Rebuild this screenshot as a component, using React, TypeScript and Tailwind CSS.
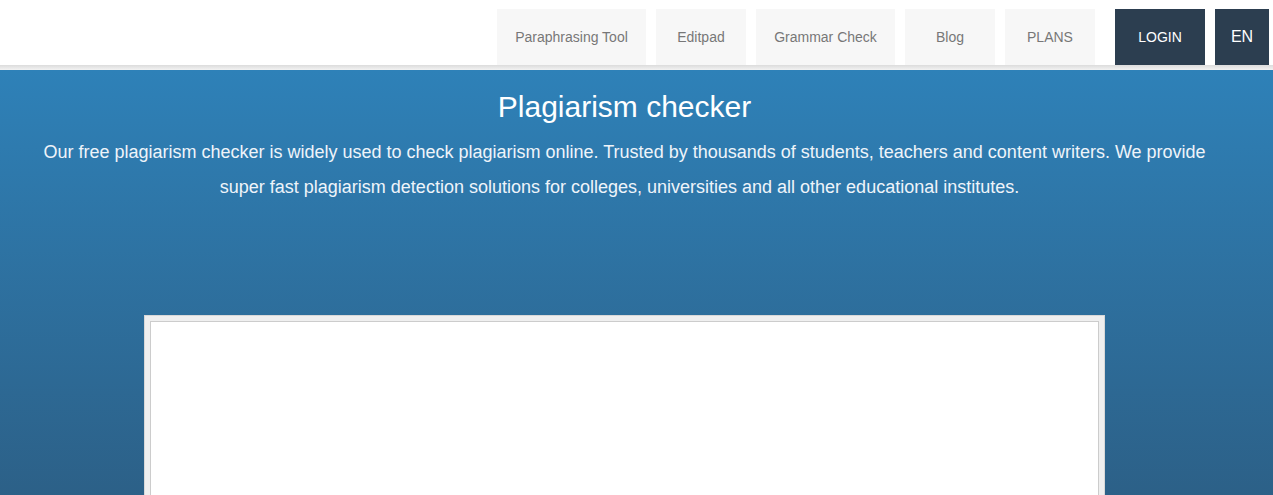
const navItems = [
  { label: "Paraphrasing Tool", w: "w-[149px]" },
  { label: "Editpad", w: "w-[90px]" },
  { label: "Grammar Check", w: "w-[139px]" },
  { label: "Blog", w: "w-[90px]" },
  { label: "PLANS", w: "w-[90px]" },
];

export default function App() {
  return (
    <div className="min-h-[495px] bg-white font-['Liberation_Sans',Arial,sans-serif] overflow-hidden">
      {/* Header */}
      <header className="h-[65px] flex items-end justify-end pr-[4px] bg-white">
        <nav className="flex items-stretch h-[56px] gap-[10px]">
          {navItems.map(n => (
            <a key={n.label}
              className={`${n.w} flex items-center justify-center bg-[#f7f7f7] text-[14px] text-[#777]`}>
              {n.label}
            </a>
          ))}
          <a className="w-[90px] ml-[10px] flex items-center justify-center bg-[#2c3e50] text-[14px] text-white">
            LOGIN
          </a>
          <a className="w-[54px] flex items-center justify-center bg-[#2c3e50] text-[16px] text-white">
            EN
          </a>
        </nav>
      </header>
      <div className="h-[5px] bg-gradient-to-b from-[#dcdcdc] to-[#f2f2f2]" />

      {/* Hero */}
      <section className="h-[430px] bg-gradient-to-b from-[#2e81b8] to-[#2c6087] pr-[24px]">
        <h1 className="pt-[20px] text-center text-[30px] leading-[34px] text-white">Plagiarism checker</h1>
        <p className="mt-[11px] px-[40px] text-center text-[18px] leading-[35px] text-[#eef4fa]">
          Our free plagiarism checker is widely used to check plagiarism online. Trusted by thousands of students, teachers and content writers. We provide super fast plagiarism detection solutions for colleges, universities and all other educational institutes.&nbsp;&nbsp;
        </p>
        <div className="mt-[110px] mx-auto w-[961px] h-[200px] bg-[#efefef] border border-[#d8d8d8] p-[5px]">
          <div className="h-full bg-white border border-[#cccccc]" />
        </div>
      </section>
    </div>
  );
}
